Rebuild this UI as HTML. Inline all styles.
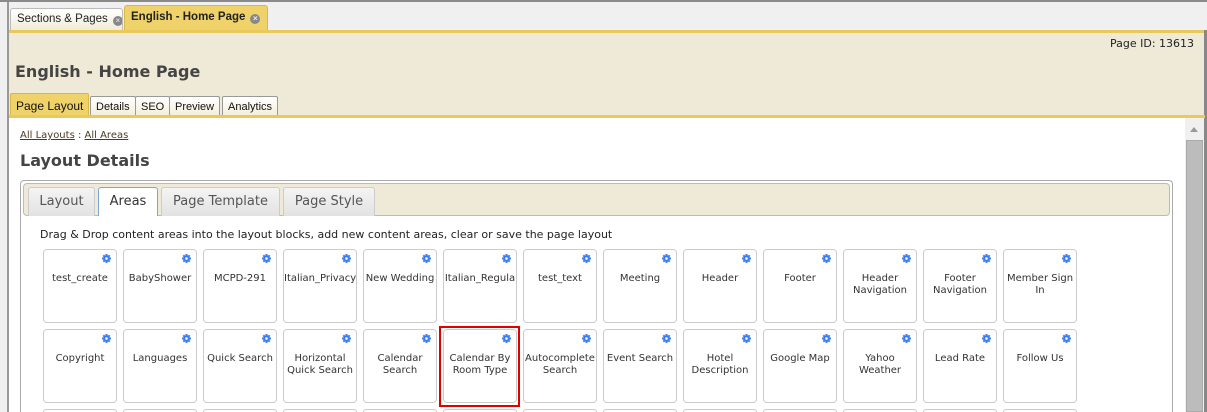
<!DOCTYPE html>
<html style="width:1207px;height:412px;overflow:hidden"><head><meta charset="utf-8"><style>
*{box-sizing:border-box;margin:0;padding:0}
body{width:1207px;height:412px;overflow:hidden;background:#f0f0f0;font-family:"DejaVu Sans",Verdana,sans-serif;position:relative}
.abs{position:absolute}
.toptab{position:absolute;top:8px;height:22px;border:1px solid #bbb;border-bottom:none;border-radius:3px 3px 0 0;font-family:"Liberation Sans",Arial,sans-serif;font-size:12px;color:#222;padding:4px 0 0 6px;white-space:nowrap;overflow:hidden}
.x{display:inline-block;width:10px;height:10px;border-radius:50%;background:#888;color:#eee;font-size:8px;line-height:10px;text-align:center;vertical-align:-1px;margin-left:5px}
.st{position:absolute;top:96px;height:20px;border:1px solid #999;border-bottom:none;border-radius:2px 2px 0 0;background:linear-gradient(#fff,#f4eed8);font-family:"Liberation Sans",Arial,sans-serif;font-size:11px;color:#111;padding:4px 5px 0;white-space:nowrap}
.it{position:absolute;top:187px;height:29px;border:1px solid #ccc;border-bottom:none;border-radius:3px 3px 0 0;background:linear-gradient(#f4f4f4,#e2e2e2);font-size:13px;color:#555;padding:6px 0 0;text-align:center;white-space:nowrap}
.tile{position:absolute;width:74px;height:74px;border:1px solid #ccc;border-radius:4px;background:#fff;font-size:10px;color:#333;text-align:center;padding-top:23px;line-height:12px;overflow:hidden;white-space:nowrap}
.tile .w{white-space:normal}
.g{position:absolute;right:5px;top:4px;width:9px;height:9px}
</style></head><body>
<div class="abs" style="left:0;top:0;width:1207px;height:2px;background:#8a8a8a"></div>
<div class="abs" style="left:7px;top:2px;width:2px;height:410px;background:#999"></div>
<div class="toptab" style="left:10px;width:113px;background:linear-gradient(#fff,#f0ecd8);font-size:11.5px">Sections &amp; Pages<span class="x">×</span></div>
<div class="toptab" style="left:124px;top:5px;height:26px;width:144px;background:#efd36a;border-color:#d8b848;font-weight:bold;padding-top:5px;font-size:11.5px">English - Home Page<span class="x">×</span></div>
<div class="abs" style="left:9px;top:30px;width:1196px;height:3px;background:#e8c95a"></div>
<div class="abs" style="left:9px;top:33px;width:1196px;height:82px;background:#efe9d7"></div>
<div class="abs" style="left:1204px;top:30px;width:3px;height:382px;background:#888"></div>
<div class="abs" style="left:1110px;top:37px;font-size:11px;color:#222">Page ID: 13613</div>
<div class="abs" style="left:15px;top:62px;font-size:16px;font-weight:bold;color:#444">English - Home Page</div>
<div class="st" style="left:10px;top:93px;height:23px;width:79px;background:#efd36a;border-color:#d8b848;font-size:12px;padding-top:5px">Page Layout</div>
<div class="st" style="left:90px">Details</div>
<div class="st" style="left:135px">SEO</div>
<div class="st" style="left:169px">Preview</div>
<div class="st" style="left:222px">Analytics</div>
<div class="abs" style="left:9px;top:115px;width:1196px;height:3px;background:#e8c95a"></div>
<div class="abs" style="left:9px;top:118px;width:1195px;height:294px;background:#fff"></div>
<div class="abs" style="left:1185px;top:118px;width:19px;height:294px;background:#f0f0f0"></div>
<div class="abs" style="left:1190px;top:127px;width:0;height:0;border:4px solid transparent;border-bottom:5px solid #999;border-top:0"></div>
<div class="abs" style="left:1186px;top:140px;width:17px;height:272px;background:#bcbcbc;border:1px solid #aaa"></div>
<div class="abs" style="left:20px;top:130px;font-size:10px;color:#4a3a20"><u>All Layouts</u> : <u>All Areas</u></div>
<div class="abs" style="left:20px;top:151px;font-size:16px;font-weight:bold;color:#444">Layout Details</div>
<div class="abs" style="left:20px;top:180px;width:1153px;height:232px;border:1px solid #aaa;border-bottom:none;border-radius:4px 4px 0 0;background:#fff"></div>
<div class="abs" style="left:23px;top:183px;width:1147px;height:33px;border:1px solid #bbb;border-radius:4px;background:#efe9d7"></div>
<div class="it" style="left:28px;width:67px">Layout</div>
<div class="it" style="left:98px;width:60px;background:#fff;border:1px solid #7aa7e0;border-bottom:none;color:#333">Areas</div>
<div class="it" style="left:161px;width:119px">Page Template</div>
<div class="it" style="left:283px;width:92px">Page Style</div>
<div class="abs" style="left:40px;top:228px;font-size:11px;color:#222;white-space:nowrap">Drag &amp; Drop content areas into the layout blocks, add new content areas, clear or save the page layout</div>
<div id="tiles"></div>
<div class="abs" style="left:439px;top:326px;width:81px;height:81px;border:2px solid #e00000"></div>
<script>
var r1=["test_create","BabyShower","MCPD-291","Italian_Privacy","New Wedding","Italian_Regula","test_text","Meeting","Header","Footer","Header Navigation","Footer Navigation","Member Sign In"];
var r2=["Copyright","Languages","Quick Search","Horizontal Quick Search","Calendar Search","Calendar By Room Type","Autocomplete Search","Event Search","Hotel Description","Google Map","Yahoo Weather","Lead Rate","Follow Us"];
var g='<svg class="g" viewBox="0 0 9 9"><circle cx="4.5" cy="4.5" r="3.3" fill="#3a7ef0"/><rect x="3.5" y="0" width="2" height="9" fill="#3a7ef0"/><rect x="0" y="3.5" width="9" height="2" fill="#3a7ef0"/><rect x="3.5" y="0" width="2" height="9" fill="#3a7ef0" transform="rotate(45 4.5 4.5)"/><rect x="3.5" y="0" width="2" height="9" fill="#3a7ef0" transform="rotate(-45 4.5 4.5)"/><circle cx="4.5" cy="4.5" r="1.3" fill="#fff"/></svg>';
var h='';
[r1,r2].forEach(function(r,j){r.forEach(function(t,i){var w=t.length>12&&t.indexOf(' ')>0?' w':'';h+='<div class="tile" style="left:'+(43+i*80)+'px;top:'+(249+j*80)+'px">'+g+'<div class="'+w+'">'+t+'</div></div>';});});
for(var i=0;i<13;i++)h+='<div class="tile" style="left:'+(43+i*80)+'px;top:409px;height:3px;border-bottom:none;border-radius:4px 4px 0 0;padding:0"></div>';
document.getElementById('tiles').innerHTML=h;
</script>
</body></html>
